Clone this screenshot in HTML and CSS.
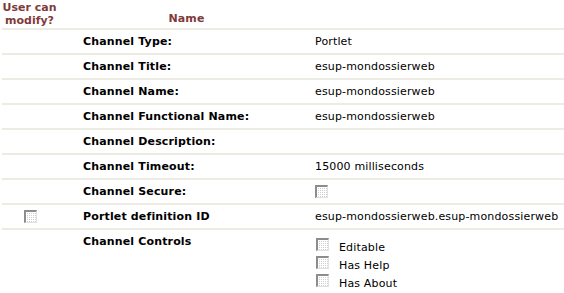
FILE: index.html
```html
<!DOCTYPE html>
<html>
<head>
<meta charset="utf-8">
<link rel="stylesheet" href="styles.css">
</head>
<body>
<table class="props">
  <thead>
    <tr>
      <th class="c-mod">User can<br>modify?</th>
      <th class="c-name">Name</th>
      <th class="c-val"></th>
    </tr>
  </thead>
  <tbody>
    <tr><td class="c-mod"></td><td class="c-label">Channel Type:</td><td class="c-val">Portlet</td></tr>
    <tr><td class="c-mod"></td><td class="c-label">Channel Title:</td><td class="c-val">esup-mondossierweb</td></tr>
    <tr><td class="c-mod"></td><td class="c-label">Channel Name:</td><td class="c-val">esup-mondossierweb</td></tr>
    <tr><td class="c-mod"></td><td class="c-label">Channel Functional Name:</td><td class="c-val">esup-mondossierweb</td></tr>
    <tr><td class="c-mod"></td><td class="c-label">Channel Description:</td><td class="c-val"></td></tr>
    <tr><td class="c-mod"></td><td class="c-label">Channel Timeout:</td><td class="c-val">15000 milliseconds</td></tr>
    <tr><td class="c-mod"></td><td class="c-label">Channel Secure:</td><td class="c-val"><span class="cb"></span></td></tr>
    <tr><td class="c-mod"><span class="cb"></span></td><td class="c-label">Portlet definition ID</td><td class="c-val">esup-mondossierweb.esup-mondossierweb</td></tr>
    <tr class="last">
      <td class="c-mod"></td>
      <td class="c-label">Channel Controls</td>
      <td class="c-val">
        <div class="ctl"><span class="cb"></span><span class="ctl-text">Editable</span></div>
        <div class="ctl"><span class="cb"></span><span class="ctl-text">Has Help</span></div>
        <div class="ctl"><span class="cb"></span><span class="ctl-text">Has About</span></div>
      </td>
    </tr>
  </tbody>
</table>
</body>
</html>
```

FILE: styles.css
```css
html, body {
  margin: 0;
  padding: 0;
  background: #ffffff;
}

body {
  font-family: "DejaVu Sans", Verdana, sans-serif;
  font-size: 11px;
  color: #000000;
  letter-spacing: 0.15px;
}

.props {
  border-collapse: collapse;
  margin-left: 2px;
  width: calc(100% - 2px);
  table-layout: fixed;
}

.props th,
.props td {
  padding: 0;
  line-height: 13px;
  border-bottom: 2px solid #edece3;
}

.props th {
  color: #7f3b3b;
  font-weight: bold;
  height: 29px;
  vertical-align: bottom;
  padding-bottom: 3px;
  box-sizing: border-box;
}

.props td {
  height: 23px;
  vertical-align: middle;
}

.c-mod {
  width: 58px;
}

td.c-mod {
  text-align: center;
  padding-right: 2px;
}

.props th.c-mod {
  text-align: center;
  vertical-align: top;
  padding-top: 1px;
  padding-bottom: 0;
  padding-right: 3px;
  letter-spacing: 0;
}

.c-name {
  width: 253px;
  text-align: center;
}

.c-label {
  font-weight: bold;
  padding-left: 23px !important;
}

.c-val {
  padding-left: 2px !important;
}

.props tr.last td {
  border-bottom: none;
  vertical-align: top;
  padding-top: 5px;
}

.props tr.last td.c-val {
  padding-top: 8px;
  padding-left: 3px !important;
}

.cb {
  display: inline-block;
  vertical-align: middle;
  width: 13px;
  height: 13px;
  box-sizing: border-box;
  border-style: solid;
  border-width: 2px 1px 1px 2px;
  border-color: #8c8c8c #e2e2e2 #e2e2e2 #8c8c8c;
  background-color: #ffffff;
  background-image:
    linear-gradient(90deg, #ffffff 1px, transparent 1px),
    linear-gradient(#ffffff 1px, #cfcfcf 1px);
  background-size: 2px 2px;
}

.ctl {
  display: flex;
  align-items: flex-start;
  height: 18px;
}

.ctl .cb {
  flex: none;
}

.ctl-text {
  margin-left: 10px;
  margin-top: 3px;
}
```
